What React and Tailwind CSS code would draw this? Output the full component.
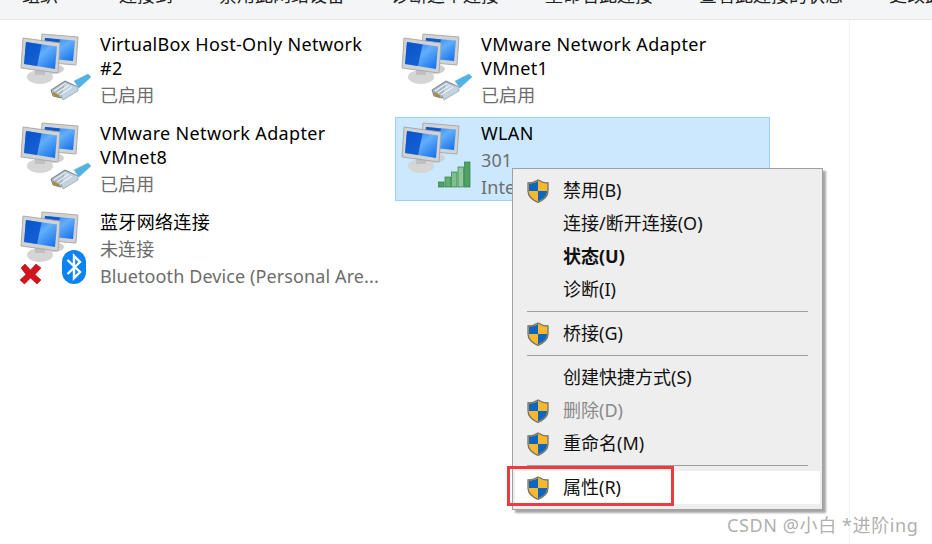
const toolbarItems = ['组织', '连接到', '禁用此网络设备', '诊断这个连接', '重命名此连接', '查看此连接的状态', '更改此连接的设置'];

const connections = [
  { name: ['VirtualBox Host-Only Network', '#2'], lines: ['已启用'], badge: 'plug' },
  { name: ['VMware Network Adapter', 'VMnet1'], lines: ['已启用'], badge: 'plug' },
  { name: ['VMware Network Adapter', 'VMnet8'], lines: ['已启用'], badge: 'plug' },
  { name: ['WLAN'], lines: ['301', 'Intel(R) Wireless-AC 9560'], badge: 'signal', selected: true },
  { name: ['蓝牙网络连接'], lines: ['未连接', 'Bluetooth Device (Personal Are...'], badge: 'bluetooth' },
];

const menuGroups = [
  [
    { label: '禁用(B)', shield: true },
    { label: '连接/断开连接(O)' },
    { label: '状态(U)', bold: true },
    { label: '诊断(I)' },
  ],
  [{ label: '桥接(G)', shield: true }],
  [
    { label: '创建快捷方式(S)' },
    { label: '删除(D)', shield: true, disabled: true },
    { label: '重命名(M)', shield: true },
  ],
  [{ label: '属性(R)', shield: true, active: true }],
];

const Monitor = ({ x, y, w, h, skew }) => (
  <g>
    <path d={`M${x} ${y}L${x + w} ${y + skew}L${x + w - 2} ${y + h + skew}L${x - 2} ${y + h}Z`} fill="#d0d2d3" stroke="#a4a6a7" strokeWidth="0.9" />
    <path d={`M${x + 3} ${y + 4}L${x + w - 3} ${y + skew + 3.5}L${x + w - 5} ${y + h + skew - 4}L${x + 1} ${y + h - 4}Z`} fill="url(#screen)" />
    <path d={`M${x + 3} ${y + 4}L${x + w * 0.5} ${y + 4 + skew * 0.5}L${x + w * 0.38} ${y + h - 4 + skew * 0.38}L${x + 1} ${y + h - 4}Z`} fill="#0650c8" fillOpacity="0.85" />
  </g>
);

const NetworkIcon = ({ badge }) => (
  <svg width="72" height="72" viewBox="0 0 72 72" className="shrink-0 overflow-visible">
    <defs>
      <linearGradient id="screen" x1="0" y1="0" x2="1" y2="1">
        <stop offset="0" stopColor="#1367e6" />
        <stop offset="0.5" stopColor="#62aefc" />
        <stop offset="1" stopColor="#0f6be8" />
      </linearGradient>
    </defs>
    <ellipse cx="33" cy="36" rx="11" ry="5" fill="#cfd1d1" />
    <Monitor x={22} y={1} w={36} h={28} skew={3} />
    <ellipse cx="20" cy="44" rx="13" ry="7" fill="#d4d5d4" />
    <rect x="15" y="36" width="10" height="6" fill="#bfc1c1" />
    <Monitor x={3} y={5} w={37} h={30} skew={5} />
    {badge === 'plug' && (
      <g>
        <path d="M54 48L68 41L71 44L59 55Z" fill="#4fb3e4" stroke="#7fb4cf" strokeWidth="0.6" />
        <path d="M31 57L45 48L58 54L41 65L33 63Z" fill="#a9b8c6" stroke="#6f7b86" strokeWidth="0.9" />
        <path d="M45 49L58 54L58 58L43 67L41 62Z" fill="#c3d2df" stroke="#8796a3" strokeWidth="0.6" />
        <path d="M34 58L46 50M37 60L49 52M40 62L52 54" stroke="#eef1f3" strokeWidth="1.2" />
        <path d="M33 60L39 64" stroke="#ad8a2e" strokeWidth="2.4" />
      </g>
    )}
    {badge === 'signal' && (
      <g stroke="#2f7d45" strokeWidth="0.7">
        <rect x="37.5" y="60" width="5.5" height="5" fill="#4fa25f" />
        <rect x="44" y="55" width="5.5" height="10" fill="#62b070" />
        <rect x="50.5" y="50" width="5.5" height="15" fill="#7fc088" />
        <rect x="57" y="45" width="5.5" height="20" fill="#8fc99a" />
        <rect x="63.5" y="40" width="5.5" height="25" fill="#4ea262" />
      </g>
    )}
    {badge === 'bluetooth' && (
      <g>
        <path d="M1 57L5 53L10.5 59L16 53L21 57L15 63.5L21 69L17 73L10.5 67L4.5 73L0 69L6 63.5Z" fill="#d3141c" stroke="#a50f15" strokeWidth="0.6" />
        <rect x="42" y="39" width="24" height="34" rx="12" fill="#0b83f1" />
        <path d="M47.5 49L60 61L54 67V45L60 51L47.5 63" fill="none" stroke="#ffffff" strokeWidth="2.4" />
      </g>
    )}
  </svg>
);

const Shield = () => (
  <svg width="22" height="24" viewBox="0 0 22 24" className="shrink-0">
    <path d="M11 1C8 3 4.500 4 1 4V12C1 17.500 5.500 21 11 23.300C16.500 21 21 17.500 21 12V4C17.500 4 14 3 11 1Z" fill="#f5b82e" stroke="#77736a" strokeWidth="1.300" />
    <path d="M11 2V12H2V4.700C5 4.700 8.500 3.700 11 2Z" fill="#0b66c2" />
    <path d="M11 12H20V12.200C20 17 16 20.200 11 22.300Z" fill="#0b66c2" />
  </svg>
);

const ConnectionCard = ({ item }) => (
  <div className={`flex h-[84px] border pl-[5px] pt-[3px] ${item.selected ? 'border-[#99d1ff] bg-[#cce8ff]' : 'border-transparent'}`}>
    <div className="pt-px">
      <NetworkIcon badge={item.badge} />
    </div>
    <div className="ml-[8px] w-[284px]">
      {item.name.map((line) => (
        <div key={line} className="whitespace-nowrap text-[18px] leading-[24px] tracking-[0.33px] text-black">{line}</div>
      ))}
      <div className="mt-[2px]">
        {item.lines.map((line) => (
          <div key={line} className="whitespace-nowrap text-[18px] leading-[26.5px] tracking-[0.1px] text-[#6d6d6d]">{line}</div>
        ))}
      </div>
    </div>
  </div>
);

const MenuItem = ({ item }) => (
  <div className={`flex h-[33px] items-center pl-[12px] text-[18px] ${item.active ? 'bg-white' : ''} ${item.disabled ? 'text-[#8a8a8a]' : 'text-[#111111]'} ${item.bold ? 'font-bold' : ''}`}>
    <div className="w-[24px]">{item.shield && <Shield />}</div>
    <span className="ml-[12px]">{item.label}</span>
  </div>
);

const App = () => {
  return (
    <div className="relative h-[544px] w-[932px] overflow-hidden bg-white font-['Noto_Sans','Noto_Sans_CJK_SC',sans-serif]">
      <div className="h-[20px] overflow-hidden border-b border-[#e6e7e9] bg-[#f4f5f7]">
        <div className="-mt-[15px] flex gap-[46px] whitespace-nowrap pl-[22px] text-[18px] leading-[20px] text-[#222222]">
          {toolbarItems.map((label, index) => (
            <span key={label} className={index === 0 ? 'mr-[15px]' : ''}>{label}</span>
          ))}
        </div>
      </div>

      <div className="h-[524px] w-[850px] border-r border-[#f1f2f3] pl-[14px] pt-[8px]">
        <div className="grid grid-cols-[375px_375px] gap-x-[6px] gap-y-[5px]">
          {connections.map((item) => (
            <ConnectionCard key={item.name[0] + item.name[1]} item={item} />
          ))}
        </div>
      </div>

      <div className="absolute left-[512px] top-[168px] w-[311px] border border-[#a0a0a0] bg-[#eeeeee] px-[2px] pb-[5px] pt-[5px] shadow-[3px_3px_2px_rgba(0,0,0,0.35)]">
        {menuGroups.map((group, groupIndex) => (
          <div key={groupIndex}>
            {groupIndex > 0 && <div className="mx-[12px] my-[5px] h-px bg-[#a0a0a0]" />}
            {group.map((item) => (
              <MenuItem key={item.label} item={item} />
            ))}
          </div>
        ))}
      </div>

      <div className="absolute left-[507px] top-[466px] h-[40px] w-[167px] border-[3px] border-[#ea3b3f]" />

      <div className="absolute left-[727px] top-[513px] whitespace-nowrap text-[18px] leading-[24px] tracking-[0.6px] text-[#b0b0b0]">CSDN @小白 *进阶ing</div>
    </div>
  );
};

export default App;
